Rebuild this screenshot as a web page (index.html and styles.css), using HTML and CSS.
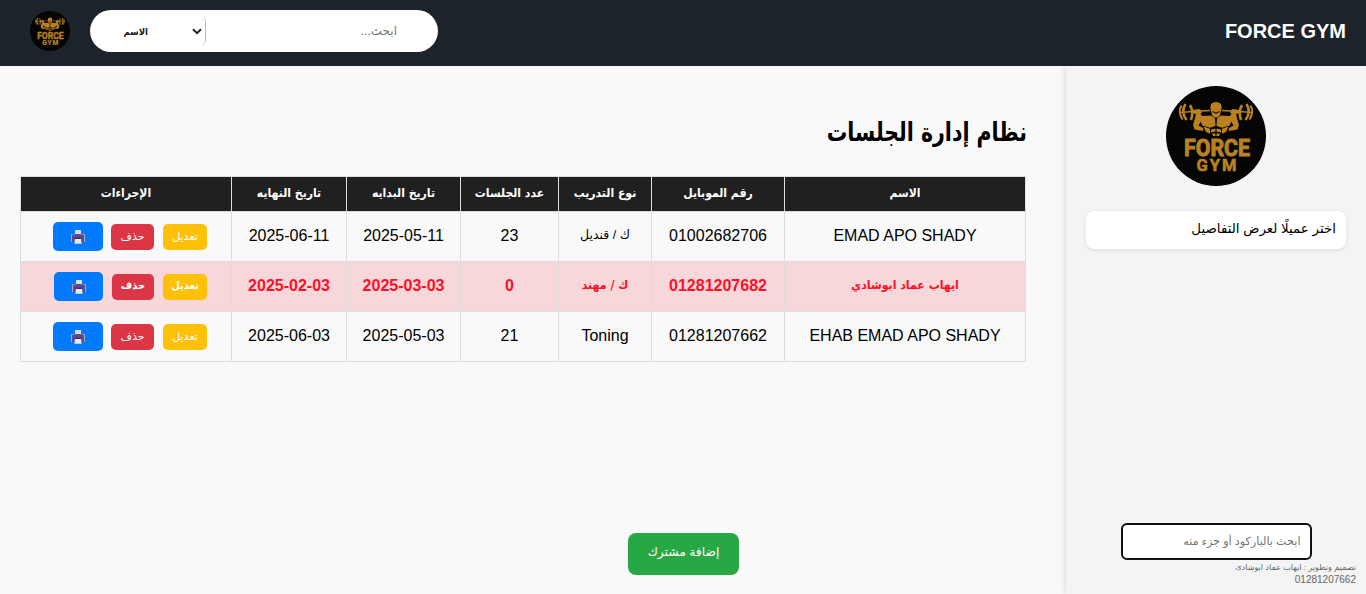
FILE: index.html
```html
<!DOCTYPE html>
<html lang="ar" dir="rtl">
<head>
<meta charset="utf-8">
<title>FORCE GYM</title>
<link rel="stylesheet" href="styles.css">
</head>
<body>
<svg class="defs" width="0" height="0" aria-hidden="true">
  <symbol id="printer" viewBox="0 0 14 14">
    <path fill="#d9dce8" d="M4 0h6v5H4z"/>
    <path fill="#a9a8bd" d="M0 4h1.500v8H0zM12.500 4H14v8h-1.500z"/>
    <path fill="#5c4b91" d="M1 4h12v8H1z"/>
    <path fill="#3b315f" d="M4 7.500h6V9H4z"/>
    <path fill="#8a7bb0" d="M1 4h3v1H1zM10 4h3v1h-3z"/>
    <path fill="#e9e9f2" d="M4 9h6l.6 4.800H3.400z"/>
  </symbol>
</svg>

<header class="topbar">
  <div class="brand">FORCE GYM</div>
  <div class="tools">
    <div class="search">
      <div class="search-input">ابحث...</div>
      <div class="search-select">
        <svg class="chevron" viewBox="0 0 10 7"><path d="M1 1.200l4 4 4-4" fill="none" stroke="#222" stroke-width="2"/></svg>
        <span>الاسم</span>
      </div>
    </div>
    <svg class="logo-small" viewBox="0 0 100 100"><use href="#logo"/></svg>
  </div>
</header>

<div class="layout">
  <aside class="sidebar">
    <svg class="logo-large" viewBox="0 0 100 100">
      <g id="logo">
        <circle cx="50" cy="50" r="50" fill="#050505"/>
        <g fill="#b9821f">
          <path d="M50 16c4.500 0 6 3 5.500 7L54 29l-2 2.500h-4L46 29l-1.500-6C44 19 45.500 16 50 16z"/>
          <path d="M36 30l9-.5 4 3 .5 7.500-5.500 1.800-7.500-2.300-2.500-5zM64 30l-9-.5-4 3-.5 7.500 5.500 1.800 7.500-2.300 2.500-5z"/>
          <path d="M34 27l-4 1.500-3 10.500 1.500 4.500 9 1.500-.5-3-4.500-2.500 4.500-8zM66 27l4 1.500 3 10.500-1.500 4.500-9 1.500.5-3 4.500-2.500-4.500-8z"/>
          <path d="M37.500 40.500l6.500 2.300v5l-4-1.800zM62.500 40.500L56 42.800v5l4-1.800zM45 43.500l4.500-1v3l-4.500 1zM55 43.500l-4.500-1v3l4.500 1zM46 47.500h3.500V50H47zM54 47.500h-3.500V50H53z"/>
          <path d="M26 24l8-1 2 4-5 2-4-2zM74 24l-8-1-2 4 5 2 4-2z"/>
        </g>
        <g fill="none" stroke="#b9821f">
          <path stroke-width="1.400" d="M13 26.500l14-1 17-1M87 26.500l-14-1-17-1"/>
          <path stroke-width="2.600" d="M24 19q4 7 1 15M76 19q-4 7-1 15M19.500 18q-5 8 1 16M80.500 18q5 8-1 16"/>
          <path stroke-width="2" d="M15.500 19.500q-4 6 1 14M84.500 19.500q4 6-1 14"/>
        </g>
        <path d="M46 25l4 1.200 4-1.200-.6 1.500L50 28l-3.400-1.500z" fill="#050505" opacity=".7"/>
        <text class="logo-text logo-force" x="18" y="70" textLength="66" lengthAdjust="spacingAndGlyphs" direction="ltr">FORCE</text>
        <text class="logo-text logo-gym" x="30.500" y="85" textLength="40" lengthAdjust="spacing" direction="ltr">GYM</text>
      </g>
    </svg>
    <div class="details">اختر عميلًا لعرض التفاصيل</div>
    <div class="barcode">ابحث بالباركود أو جزء منه</div>
    <footer class="credit">
      <div class="credit-name">تصميم وتطوير : ايهاب عماد ابوشادى</div>
      <div>01281207662</div>
    </footer>
  </aside>
  <main class="main">
    <h1 class="title">نظام إدارة الجلسات</h1>
    <table class="sessions">
      <colgroup><col class="c-name"><col class="c-phone"><col class="c-type"><col class="c-count"><col class="c-start"><col class="c-end"><col class="c-actions"></colgroup>
      <thead>
        <tr><th>الاسم</th><th>رقم الموبايل</th><th>نوع التدريب</th><th>عدد الجلسات</th><th>تاريخ البدايه</th><th>تاريخ النهايه</th><th>الإجراءات</th></tr>
      </thead>
      <tbody>
        <tr>
          <td>EMAD APO SHADY</td><td>01002682706</td><td class="ar">ك / قنديل</td><td>23</td><td>2025-05-11</td><td>2025-06-11</td>
          <td class="cell-actions"><div class="actions"><span class="btn edit">تعديل</span><span class="btn delete">حذف</span><span class="btn print"><svg><use href="#printer"/></svg></span></div></td>
        </tr>
        <tr class="expired">
          <td class="ar">ايهاب عماد ابوشادي</td><td>01281207682</td><td class="ar">ك / مهند</td><td>0</td><td>2025-03-03</td><td>2025-02-03</td>
          <td class="cell-actions"><div class="actions"><span class="btn edit">تعديل</span><span class="btn delete">حذف</span><span class="btn print"><svg><use href="#printer"/></svg></span></div></td>
        </tr>
        <tr>
          <td>EHAB EMAD APO SHADY</td><td>01281207662</td><td>Toning</td><td>21</td><td>2025-05-03</td><td>2025-06-03</td>
          <td class="cell-actions"><div class="actions"><span class="btn edit">تعديل</span><span class="btn delete">حذف</span><span class="btn print"><svg><use href="#printer"/></svg></span></div></td>
        </tr>
      </tbody>
    </table>
    <div class="add">إضافة مشترك</div>
  </main>
</div>
</body>
</html>
```

FILE: styles.css
```css
* { box-sizing: border-box; }
body { margin: 0; height: 594px; overflow: hidden; background: #f9f9f9; color: #000; font-family: "Liberation Sans", "DejaVu Sans", sans-serif; font-size: 16px; white-space: nowrap; }
.defs { position: absolute; }
.logo-text { font-family: Roboto, sans-serif; font-weight: bold; fill: #b9821f; stroke: #b9821f; }
.logo-force { font-size: 23.500px; stroke-width: 1; }
.logo-gym { font-size: 16.500px; stroke-width: .6; }

.topbar { height: 66px; padding: 0 20px 4px 30px; background: #1c232b; display: flex; align-items: center; justify-content: space-between; }
.brand { color: #fff; font-size: 20px; font-weight: bold; }
.tools { display: flex; align-items: center; gap: 20px; }
.logo-small { width: 40px; height: 40px; }
.search { width: 348px; height: 42px; background: #fff; border-radius: 21px; display: flex; align-items: center; }
.search-input { flex: 1; padding-right: 41px; color: #757575; font-size: 12px; }
.search-select { width: 116px; height: 28px; border-right: 1px solid #bbb; border-radius: 0 5px 5px 0; display: flex; align-items: center; gap: 44px; padding-right: 3px; font-family: "DejaVu Sans Condensed", "DejaVu Sans", sans-serif; font-size: 9.500px; font-weight: bold; color: #222; }
.chevron { width: 10px; height: 7px; }

.layout { display: flex; height: 528px; }
.sidebar { width: 300px; background: #f4f4f4; box-shadow: -2px 0 5px rgba(0,0,0,.1); padding: 20px 20px 0; display: flex; flex-direction: column; align-items: center; z-index: 1; }
.logo-large { width: 100px; height: 100px; flex: none; }
.details { width: 260px; height: 38px; margin-top: 25px; padding: 0 10px 3px; line-height: 35px; background: #fff; border-radius: 8px; box-shadow: 0 1px 4px rgba(0,0,0,.1); font-size: 13.400px; }
.barcode { width: 191px; height: 37px; margin-top: auto; border: 2px solid #101010; border-radius: 6px; background: #fff; color: #757575; font-size: 11.200px; line-height: 32px; padding-right: 9px; }
.credit { width: 280px; height: 34px; padding-top: 2px; font-size: 10px; line-height: 12px; color: #666; }
.credit-name { font-size: 8.100px; }

.main { flex: 1; padding: 46px 40px 19px 20px; display: flex; flex-direction: column; }
.title { margin: 0 -1px 0 0; height: 65px; line-height: 40px; font-family: "DejaVu Sans Condensed", "DejaVu Sans", sans-serif; font-size: 26px; transform: scaleX(.877); transform-origin: right; }
.sessions { width: 1006px; margin-top: -1px; table-layout: fixed; border-collapse: collapse; text-align: center; }
.c-name { width: 241px; } .c-phone { width: 133px; } .c-type { width: 93px; } .c-count { width: 98px; } .c-start { width: 114px; } .c-end { width: 115px; } .c-actions { width: 211px; }
.sessions th, .sessions td { border: 1px solid #ddd; padding: 0; }
.sessions th { height: 34.500px; padding-bottom: 1px; background: #202020; color: #fff; font-family: "DejaVu Sans Condensed", "DejaVu Sans", sans-serif; font-size: 12.100px; }
.sessions td { height: 50px; padding-bottom: 0; }
.sessions .cell-actions { padding-top: 1px; }
.sessions .ar { font-size: 12.500px; padding-bottom: 3px; }
.expired { background: #f8d7da; color: #ff0f27; font-weight: bold; }
.sessions .expired .ar { font-family: "DejaVu Sans Condensed", "DejaVu Sans", sans-serif; font-size: 12.200px; }
.expired .btn { font-family: "DejaVu Sans Condensed", "DejaVu Sans", sans-serif; }
.actions { display: flex; align-items: center; padding-right: 24px; gap: 9px; }
.btn { color: #fff; border-radius: 5px; font-size: 11px; height: 26px; line-height: 24px; }
.edit { width: 44px; background: #ffc107; }
.delete { width: 43px; background: #dc3545; }
.expired .delete { width: 42px; }
.print { width: 50px; height: 29px; background: #007bff; display: flex; align-items: center; justify-content: center; margin-right: -1px; }
.expired .print { width: 49px; margin-right: 0; }
.print svg { width: 14px; height: 14px; }
.add { width: 111px; height: 42px; margin: auto 287px 0 0; border-radius: 8px; background: #28a745; color: #fff; text-align: center; line-height: 39px; font-size: 12.300px; }
```
